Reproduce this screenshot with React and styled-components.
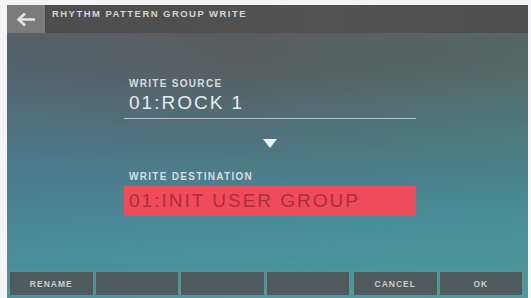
import React from 'react';
import styled, { createGlobalStyle } from 'styled-components';

const GlobalStyle = createGlobalStyle`
  html, body {
    margin: 0;
    padding: 0;
    background: #f4f4f6;
  }
  body {
    font-family: "Liberation Sans", Arial, sans-serif;
  }
`;

const Frame = styled.div`
  width: 531px;
  height: 298px;
  padding: 5px 3px 0 7px;
  box-sizing: border-box;
  overflow: hidden;
`;

const Screen = styled.div`
  width: 521px;
  height: 293px;
  display: flex;
  flex-direction: column;
  background:
    linear-gradient(90deg, rgba(70, 120, 160, 0.18) 0%, rgba(0, 0, 0, 0) 45%, rgba(60, 170, 140, 0.15) 100%),
    linear-gradient(180deg, #5a5a5b 0%, #585d5f 20%, #4f7480 47%, #4a8796 70%, #4a9a9e 100%);
`;

const TitleBar = styled.div`
  height: 28px;
  display: flex;
  background: linear-gradient(90deg, #4d4d4e 0%, #525253 60%, #4f4f50 100%);
`;

const BackButton = styled.div`
  width: 38px;
  height: 28px;
  background: #7b7b7c;
  display: flex;
  align-items: center;
  justify-content: center;
`;

const Title = styled.div`
  padding: 3px 0 0 7px;
  font-size: 9.5px;
  line-height: 12px;
  font-weight: 700;
  letter-spacing: 1.45px;
  color: #d4d4d4;
`;

const Body = styled.div`
  flex: 1;
  padding: 45px 0 0 117px;
`;

const Block = styled.div`
  width: 292px;
  display: flex;
  flex-direction: column;
`;

const Label = styled.div`
  padding-left: 5px;
  margin-top: ${p => p.$top || 0}px;
  font-size: 10px;
  line-height: 12px;
  font-weight: 700;
  letter-spacing: 1.3px;
  color: #d6dedf;
`;

const Source = styled.div`
  margin-top: 2px;
  padding: 0 0 4px 5px;
  border-bottom: 1px solid #b8c4c6;
  font-size: 19px;
  line-height: 22px;
  letter-spacing: 2px;
  color: #e6ecec;
`;

const Arrow = styled.div`
  align-self: center;
  margin-top: 20px;
  width: 0;
  height: 0;
  border-left: 7px solid transparent;
  border-right: 7px solid transparent;
  border-top: 9px solid #eef2f2;
`;

const Destination = styled.div`
  margin-top: 3px;
  height: 30px;
  padding-left: 5px;
  background: #ef4b5a;
  font-size: 19px;
  line-height: 30px;
  letter-spacing: 2px;
  color: #a9313c;
`;

const Footer = styled.div`
  height: 26px;
  box-sizing: border-box;
  padding: 0 6px 3px 3px;
  display: flex;
  align-items: flex-end;
  gap: 3px;
`;

const Key = styled.div`
  flex: 1;
  height: 23px;
  margin-left: ${p => p.$gap || 0}px;
  background: #4f5a5c;
  box-shadow: 0 0 0 1px rgba(110, 140, 140, 0.55);
  display: flex;
  align-items: center;
  justify-content: center;
  font-size: 8.5px;
  font-weight: 700;
  letter-spacing: 1px;
  color: #c9cfd0;
`;

export default function App() {
  return (
    <>
      <GlobalStyle />
      <Frame>
        <Screen>
          <TitleBar>
            <BackButton>
              <svg width="20" height="15" viewBox="0 0 20 15">
                <path d="M19 7.5H3M9 1.5L2.5 7.5L9 13.5" fill="none" stroke="#e4e4e4" strokeWidth="2.6" />
              </svg>
            </BackButton>
            <Title>RHYTHM PATTERN GROUP WRITE</Title>
          </TitleBar>
          <Body>
            <Block>
              <Label>WRITE SOURCE</Label>
              <Source>01:ROCK 1</Source>
              <Arrow />
              <Label $top={23}>WRITE DESTINATION</Label>
              <Destination>01:INIT USER GROUP</Destination>
            </Block>
          </Body>
          <Footer>
            <Key>RENAME</Key>
            <Key />
            <Key />
            <Key />
            <Key $gap={2}>CANCEL</Key>
            <Key>OK</Key>
          </Footer>
        </Screen>
      </Frame>
    </>
  );
}
